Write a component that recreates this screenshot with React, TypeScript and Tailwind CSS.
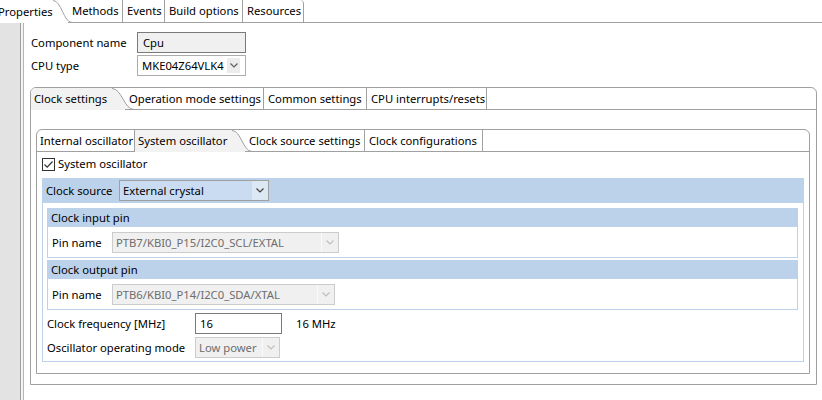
import React from 'react';

const LINE = '#a0a0a0';

// Eclipse style S-curve on the right side of the selected tab
const Curve: React.FC<{ w: number; h: number; fill: string; className?: string }> = ({ w, h, fill, className }) => {
  const d = `M0 0.5 C${w * 0.45} 0.5 ${w * 0.55} ${h - 0.5} ${w} ${h - 0.5}`;
  return (
    <svg width={w} height={h} viewBox={`0 0 ${w} ${h}`} className={`block shrink-0 relative z-0 ${className ?? ''}`}>
      <path d={`${d} L${w} ${h} L0 ${h} Z`} fill={fill} />
      <path d={d} fill="none" stroke={LINE} strokeWidth="1" />
    </svg>
  );
};

const Chevron: React.FC<{ color?: string }> = ({ color = '#404040' }) => (
  <svg width="8" height="5" viewBox="0 0 8 5" className="block">
    <path d="M0.5 0.5 L4 4 L7.5 0.5" fill="none" stroke={color} strokeWidth="1.2" />
  </svg>
);

const DisabledSelect: React.FC<{ value: string; width: string }> = ({ value, width }) => (
  <div className={`${width} h-[21px] flex border border-[#cccccc] bg-[#f0f0f0] text-[#6d6d6d]`}>
    <div className="flex-1 flex items-center pl-[3px] whitespace-nowrap overflow-hidden">{value}</div>
    <div className="w-[17px] border-l border-[#fafafa] flex items-center justify-center">
      <Chevron color="#bfbfbf" />
    </div>
  </div>
);

const TabText: React.FC<{ children: React.ReactNode; className: string }> = ({ children, className }) => (
  <div className={`h-full flex items-center whitespace-nowrap border-b border-r border-[#a0a0a0] pl-[4px] relative z-10 ${className}`}>
    {children}
  </div>
);

const BlueSub: React.FC<{ title: string; pin: string; selectW: string; className?: string }> = ({ title, pin, selectW, className }) => (
  <div className={className}>
    <div className="h-[19px] bg-[#bcd1ea] flex items-center pl-[4px]">{title}</div>
    <div className="h-[31px] border-x border-b border-[#bcd1ea] flex items-start pt-[5px] pl-[4px]">
      <div className="w-[60px] h-[21px] flex items-center">Pin name</div>
      <DisabledSelect value={pin} width={selectW} />
    </div>
  </div>
);

export default function App() {
  return (
    <div className="w-[822px] h-[400px] overflow-hidden bg-white text-black font-['Noto_Sans',sans-serif] text-[11.25px] leading-none flex flex-col">
      {/* Top view tabs */}
      <div className="h-[23px] flex shrink-0">
        <div className="w-[55px] -ml-[2px] h-full flex items-center bg-white whitespace-nowrap">Properties</div>
        <Curve w={19} h={23} fill="#ffffff" className="-mr-[4px]" />
        <TabText className="w-[55px]">Methods</TabText>
        <TabText className="w-[42px]">Events</TabText>
        <TabText className="w-[78px]">Build options</TabText>
        <TabText className="w-[61px] rounded-tr-[4px]">Resources</TabText>
        <div className="flex-1 border-b border-[#a0a0a0]" />
      </div>

      <div className="flex flex-1 min-h-0">
        <div className="w-[21px] shrink-0 bg-[#e3e3e3] border-r border-[#a0a0a0]" />
        <div className="w-[2px] shrink-0 bg-[#f4f4f4]" />
        <div className="flex-1 border-l border-[#b4b4b4] pl-[6px] pr-[5px] pt-[9px]">
          {/* Component rows */}
          <div className="flex items-center h-[21px] pl-[1px]">
            <div className="w-[106px]">Component name</div>
            <div className="w-[109px] h-[21px] flex items-center border border-[#7a7a7a] bg-[#f0f0f0] pl-[5px]">Cpu</div>
          </div>
          <div className="flex items-center h-[21px] pl-[1px] mt-[2px]">
            <div className="w-[106px]">CPU type</div>
            <div className="w-[109px] h-[21px] flex items-center border border-[#acacac] bg-white pl-[4px]">
              <span className="flex-1 whitespace-nowrap">MKE04Z64VLK4</span>
              <span className="w-[13px] h-[15px] mr-[5px] bg-[#ececec] flex items-center justify-center">
                <Chevron color="#606060" />
              </span>
            </div>
          </div>

          {/* Clock settings folder */}
          <div className="mt-[11px] border border-[#a0a0a0] rounded-t-[6px] overflow-hidden">
            <div className="h-[22px] flex">
              <div className="w-[81px] h-full flex items-center pl-[3px] bg-[#f2f2f2] whitespace-nowrap">Clock settings</div>
              <Curve w={22} h={22} fill="#f2f2f2" className="-mr-[9px]" />
              <TabText className="w-[139px]">Operation mode settings</TabText>
              <TabText className="w-[103px]">Common settings</TabText>
              <TabText className="w-[120px]">CPU interrupts/resets</TabText>
              <div className="flex-1 border-b border-[#a0a0a0]" />
            </div>

            <div className="pl-[5px] pr-[6px] pt-[19px] pb-[10px]">
              {/* System oscillator folder */}
              <div className="border border-[#a0a0a0] rounded-t-[6px] overflow-hidden">
                <div className="h-[22px] flex">
                  <TabText className="w-[98px] !pl-[3px]">Internal oscillator</TabText>
                  <div className="w-[97px] h-full flex items-center pl-[3px] bg-[#f2f2f2] whitespace-nowrap">System oscillator</div>
                  <Curve w={20} h={22} fill="#f2f2f2" className="-mr-[7px]" />
                  <TabText className="w-[120px]">Clock source settings</TabText>
                  <TabText className="w-[118px]">Clock configurations</TabText>
                  <div className="flex-1 border-b border-[#a0a0a0]" />
                </div>

                <div className="pl-[5px] pr-[5px] pt-[5px] pb-[11px]">
                  <label className="h-[14px] flex items-center gap-[3px]">
                    <span className="w-[13px] h-[13px] border border-[#333333] bg-white flex items-center justify-center">
                      <svg width="11" height="11" viewBox="0 0 11 11" className="block">
                        <path d="M1.5 5.5 L4.2 8.2 L9.5 2.5" fill="none" stroke="#333333" strokeWidth="1.2" />
                      </svg>
                    </span>
                    <span>System oscillator</span>
                  </label>

                  <div className="mt-[7px]">
                    <div className="h-[25px] bg-[#bcd1ea] flex items-center pl-[4px]">
                      <div className="w-[73px]">Clock source</div>
                      <div className="w-[150px] h-[21px] flex border border-[#a0a0a0]">
                        <div className="flex-1 flex items-center pl-[3px] bg-[#c9dcf1] whitespace-nowrap">External crystal</div>
                        <div className="w-[16px] bg-[#dde8f5] flex items-center justify-center">
                          <Chevron color="#404040" />
                        </div>
                      </div>
                    </div>
                    <div className="border-x border-b border-[#bcd1ea] pl-[4px] pr-[5px] pt-[5px] pb-[3px]">
                      <BlueSub title="Clock input pin" pin="PTB7/KBI0_P15/I2C0_SCL/EXTAL" selectW="w-[227px]" />
                      <BlueSub title="Clock output pin" pin="PTB6/KBI0_P14/I2C0_SDA/XTAL" selectW="w-[223px]" className="mt-[2px]" />

                      <div className="mt-[3px] h-[21px] flex items-center">
                        <div className="w-[148px]">Clock frequency [MHz]</div>
                        <div className="w-[87px] h-[21px] flex items-center border border-[#7a7a7a] bg-white pl-[4px]">16</div>
                        <div className="ml-[14px]">16 MHz</div>
                      </div>
                      <div className="mt-[3px] h-[21px] flex items-center">
                        <div className="w-[148px]">Oscillator operating mode</div>
                        <DisabledSelect value="Low power" width="w-[85px]" />
                      </div>
                    </div>
                  </div>
                </div>
              </div>
            </div>
          </div>
        </div>
      </div>
    </div>
  );
}
